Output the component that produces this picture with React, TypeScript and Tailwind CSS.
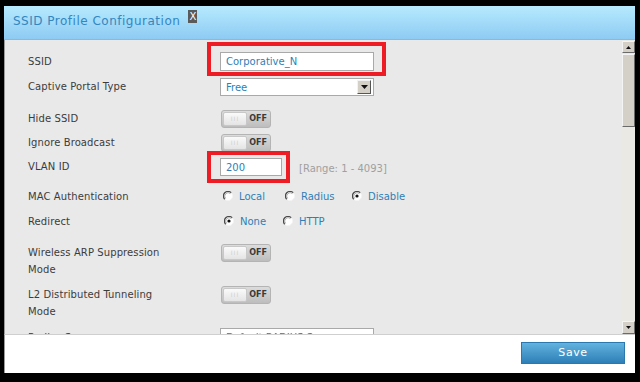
const FONT = { fontFamily: '"DejaVu Sans", Verdana, sans-serif' };

function Toggle() {
  return (
    <div className="flex h-[18px] w-[50px] rounded-[3px] border border-[#b4b4b4] bg-gradient-to-b from-[#dcdcdc] to-[#bdbdbd] p-px">
      <div className="flex w-[24px] items-center justify-center rounded-[2px] border border-[#c8c8c8] bg-gradient-to-b from-[#fafafa] to-[#e4e4e4]">
        <span className="text-[6px] leading-none tracking-[1px] text-[#cfcfcf]">III</span>
      </div>
      <div className="flex flex-1 items-center justify-center text-[8px] font-bold leading-none text-[#3a3a3a]">OFF</div>
    </div>
  );
}

function Radio({ checked }: { checked?: boolean }) {
  return (
    <svg width="10" height="10" viewBox="0 0 10 10" className="shrink-0">
      <circle cx="5" cy="5" r="4.5" fill="#ffffff" />
      <path d="M8.2 1.8 A4.5 4.5 0 0 0 1.8 8.2" fill="none" stroke="#4a4a4a" strokeWidth="1.3" />
      <path d="M7.4 2.6 A3.4 3.4 0 0 0 2.6 7.4" fill="none" stroke="#9a9a9a" strokeWidth="0.8" />
      <path d="M1.8 8.2 A4.5 4.5 0 0 0 8.2 1.8" fill="none" stroke="#f4f4f4" strokeWidth="1" />
      {checked && <circle cx="5" cy="5" r="1.6" fill="#111111" />}
    </svg>
  );
}

function RadioOpt({ label, checked, w }: { label: string; checked?: boolean; w: string }) {
  return (
    <div className={`flex items-center ${w}`}>
      <div className="-mt-[3px]"><Radio checked={checked} /></div>
      <span className="ml-[6px] text-[10px] leading-none text-[#2e7fb6]">{label}</span>
    </div>
  );
}

function Label({ children, lines }: { children: React.ReactNode; lines?: boolean }) {
  return (
    <div className={`w-[192px] shrink-0 text-[10px] tracking-[0.1px] text-[#3c3c3c] ${lines ? 'leading-[17px]' : 'leading-none'}`}>
      {children}
    </div>
  );
}

export default function App() {
  return (
    <div className="h-[382px] w-[640px] overflow-hidden bg-black pl-[4px] pt-[6px]" style={FONT}>
      <div className="flex h-[367px] w-[631px] flex-col bg-white">
        {/* header */}
        <div className="flex h-[34px] shrink-0 items-start border-b border-[#7fbde6] bg-gradient-to-b from-[#b6eafe] to-[#8ecbf3] pl-[9px] pt-[7px]">
          <span className="text-[12px] leading-[17px] tracking-[0.5px] text-[#3486bf]">SSID Profile Configuration</span>
          <span className="ml-[8px] mt-[-3px] flex h-[13px] w-[9px] items-center justify-center bg-[#5a5a5a] text-[10px] leading-none text-white">X</span>
        </div>

        {/* body */}
        <div className="flex h-[294px] shrink-0 border-l border-[#9a9a9a] bg-[#e9e9e9]">
          <div className="flex-1 overflow-hidden pl-[23px] pt-[12px]">
            <div className="flex h-[19px] items-center">
              <Label>SSID</Label>
              <div className="relative">
                <div className="flex h-[19px] w-[154px] items-center border border-[#a9a9a9] bg-white pl-[5px] text-[10px] text-[#2e7fb6]">Corporative_N</div>
                <div className="absolute -left-[13px] -top-[10px] h-[34px] w-[179px] border-[4px] border-[#ee1c25]" />
              </div>
            </div>

            <div className="mt-[7px] flex h-[18px] items-center">
              <Label>Captive Portal Type</Label>
              <div className="flex h-[18px] w-[154px] items-center justify-between border border-[#a9a9a9] bg-white pl-[5px] pr-[2px]">
                <span className="text-[10px] text-[#2e7fb6]">Free</span>
                <div className="flex h-[14px] w-[14px] items-center justify-center border border-t-[#f2f2f2] border-l-[#f2f2f2] border-b-[#555] border-r-[#555] bg-[#d4d0c8]">
                  <svg width="7" height="4" viewBox="0 0 7 4"><path d="M0 0H7L3.5 4Z" fill="#111" /></svg>
                </div>
              </div>
            </div>

            <div className="mt-[14px] flex h-[18px] items-center">
              <Label>Hide SSID</Label>
              <div className="ml-px"><Toggle /></div>
            </div>

            <div className="mt-[6px] flex h-[18px] items-center">
              <Label>Ignore Broadcast</Label>
              <div className="ml-px"><Toggle /></div>
            </div>

            <div className="mt-[6px] flex h-[18px] items-center">
              <Label>VLAN ID</Label>
              <div className="relative">
                <div className="flex h-[18px] w-[62px] items-center border border-[#a9a9a9] bg-white pl-[5px] text-[10px] text-[#2e7fb6]">200</div>
                <div className="absolute -left-[13px] -top-[7px] h-[32px] w-[83px] border-[4px] border-[#ee1c25]" />
              </div>
              <span className="ml-[17px] mt-[3px] text-[10px] text-[#a0a0a0]">[Range: 1 - 4093]</span>
            </div>

            <div className="mt-[14px] flex h-[14px] items-center">
              <Label>MAC Authentication</Label>
              <div className="ml-[3px] flex">
                <RadioOpt label="Local" w="w-[62px]" />
                <RadioOpt label="Radius" w="w-[67px]" />
                <RadioOpt label="Disable" w="w-[60px]" checked />
              </div>
            </div>

            <div className="mt-[11px] flex h-[14px] items-center">
              <Label>Redirect</Label>
              <div className="ml-[4px] flex">
                <RadioOpt label="None" w="w-[59px]" checked />
                <RadioOpt label="HTTP" w="w-[60px]" />
              </div>
            </div>

            <div className="mt-[15px] flex h-[34px] items-start">
              <Label lines>Wireless ARP Suppression<br />Mode</Label>
              <div className="ml-px"><Toggle /></div>
            </div>

            <div className="mt-[8px] flex h-[34px] items-start">
              <Label lines>L2 Distributed Tunneling<br />Mode</Label>
              <div className="ml-px"><Toggle /></div>
            </div>

            <div className="mt-[8px] flex h-[18px] items-start">
              <div className="w-[192px] shrink-0 pt-[5px] text-[10px] leading-none text-[#3c3c3c]">Radius Server</div>
              <div className="flex h-[18px] w-[154px] items-center border border-[#a9a9a9] bg-white pl-[5px] text-[10px] text-[#2e7fb6]">Default RADIUS Server</div>
            </div>
          </div>

          {/* scrollbar */}
          <div className="flex w-[13px] shrink-0 flex-col bg-[#ebe9e3] pt-px">
            <div className="flex h-[12px] items-center justify-center border border-t-[#f4f4f4] border-l-[#f4f4f4] border-b-[#6a6a6a] border-r-[#6a6a6a] bg-[#d4d0c8]">
              <svg width="5" height="3" viewBox="0 0 5 3"><path d="M0 3H5L2.5 0Z" fill="#111" /></svg>
            </div>
            <div className="mt-px h-[73px] border border-t-[#f4f4f4] border-l-[#f4f4f4] border-b-[#6a6a6a] border-r-[#6a6a6a] bg-[#d4d0c8]" />
            <div className="flex-1" />
            <div className="flex h-[13px] items-center justify-center border border-t-[#f4f4f4] border-l-[#f4f4f4] border-b-[#6a6a6a] border-r-[#6a6a6a] bg-[#d4d0c8]">
              <svg width="5" height="3" viewBox="0 0 5 3"><path d="M0 0H5L2.5 3Z" fill="#111" /></svg>
            </div>
          </div>
        </div>

        {/* footer */}
        <div className="flex flex-1 items-start justify-end border-l border-t border-[#cfcfcf] border-l-[#9a9a9a] pr-[10px] pt-[7px]">
          <button className="flex h-[22px] w-[104px] items-center justify-center border border-[#2a78ad] bg-gradient-to-b from-[#62b3de] to-[#2c7fb7] text-[11px] tracking-[0.6px] text-white">
            Save
          </button>
        </div>
      </div>
    </div>
  );
}
